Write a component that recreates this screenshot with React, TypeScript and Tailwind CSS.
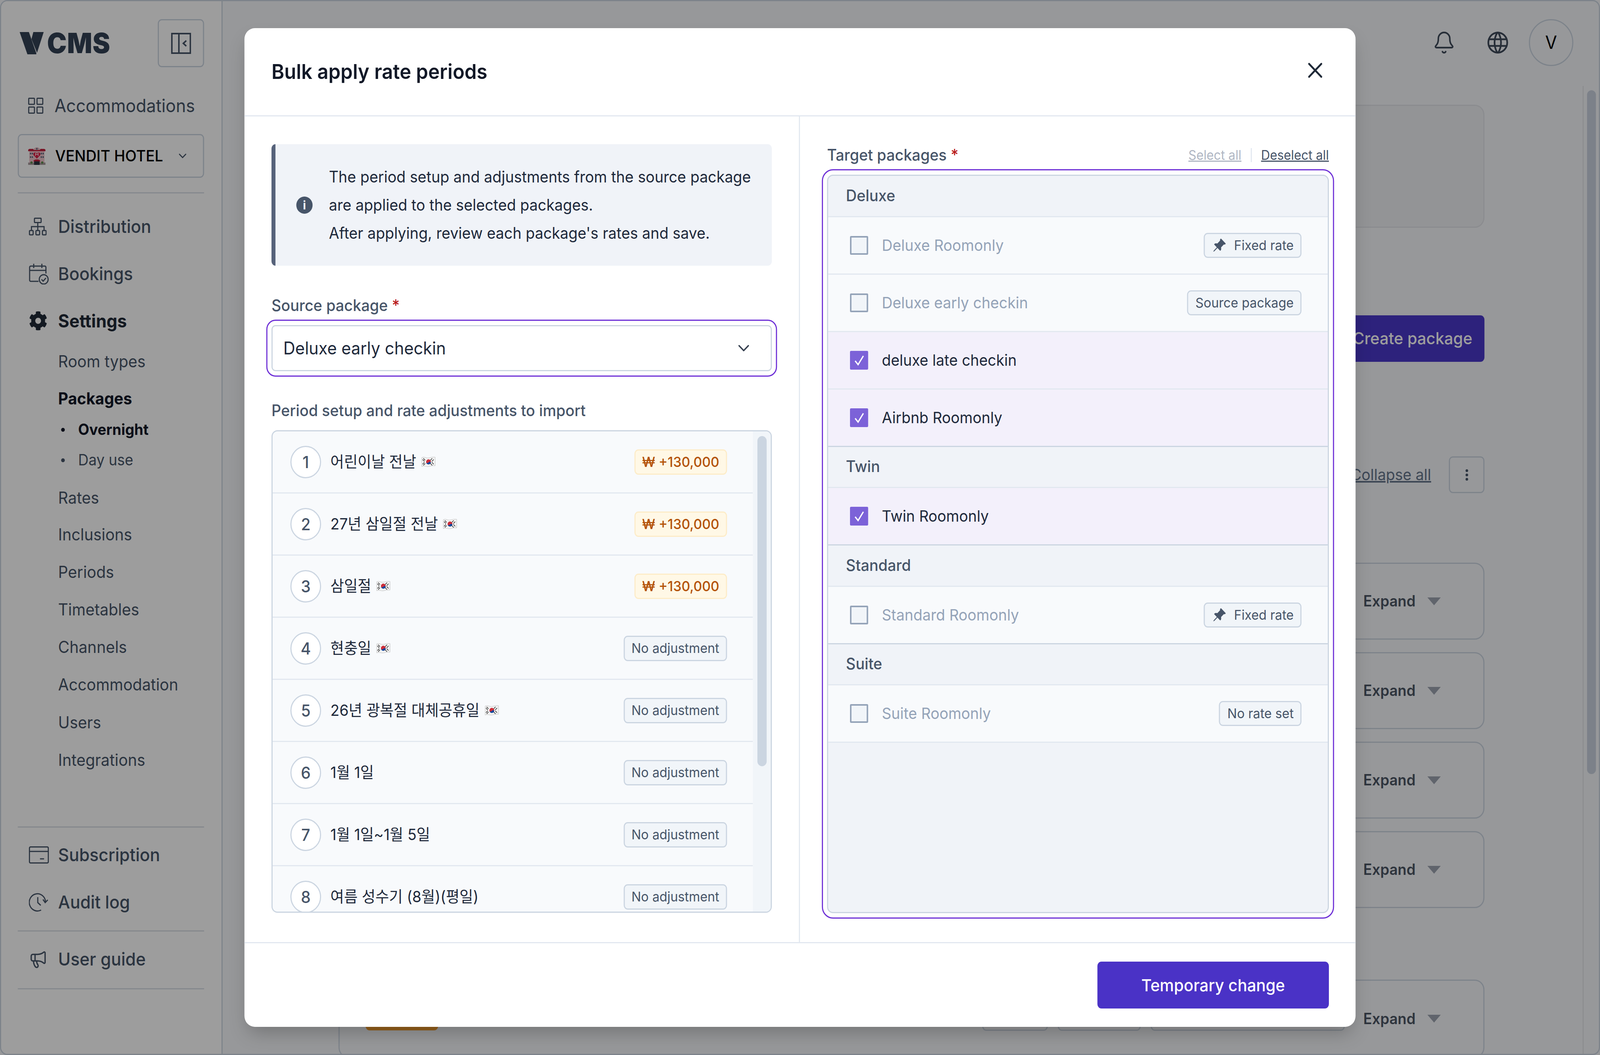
import { Bell, ChevronDown, Megaphone, X } from 'lucide-react'
import { BsPinAngleFill } from 'react-icons/bs'
import { FaCog } from 'react-icons/fa'
import { TbWorld } from 'react-icons/tb'

const periods = [
  { label: '어린이날 전날', flag: true, amount: true },
  { label: '27년 삼일절 전날', flag: true, amount: true },
  { label: '삼일절', flag: true, amount: true },
  { label: '현충일', flag: true, amount: false },
  { label: '26년 광복절 대체공휴일', flag: true, amount: false },
  { label: '1월 1일', flag: false, amount: false },
  { label: '1월 1일~1월 5일', flag: false, amount: false },
  { label: '여름 성수기 (8월)(평일)', flag: false, amount: false },
]

const groups = [
  {
    name: 'Deluxe',
    rows: [
      { label: 'Deluxe Roomonly', checked: false, badge: 'Fixed rate', pin: true },
      { label: 'Deluxe early checkin', checked: false, badge: 'Source package', pin: false },
      { label: 'deluxe late checkin', checked: true, badge: '', pin: false },
      { label: 'Airbnb Roomonly', checked: true, badge: '', pin: false },
    ],
  },
  { name: 'Twin', rows: [{ label: 'Twin Roomonly', checked: true, badge: '', pin: false }] },
  { name: 'Standard', rows: [{ label: 'Standard Roomonly', checked: false, badge: 'Fixed rate', pin: true }] },
  { name: 'Suite', rows: [{ label: 'Suite Roomonly', checked: false, badge: 'No rate set', pin: false }] },
]

const FlagKr = () => (
  <svg viewBox="0 0 38 30" className="ml-[14px] h-[30px] w-[38px] shrink-0">
    <path d="M1 4c7-3 12 2 18 1s11-3 18-2v22c-7-1-12 1-18 2s-11-3-18 0z" fill="#f4f4f4" stroke="#bdbdbd" strokeWidth="1" />
    <circle cx="19" cy="15" r="6.5" fill="#cd2e3a" />
    <path d="M12.700 16.500a6.500 6.500 0 0 0 12.600 0c-1.500-2.200-4.500-2.200-6.300 0s-4.800 2-6.300 0z" fill="#0047a0" />
    <path d="M5 6l5 5M3 9l5 5M29 6l-5 5M33 9l-5 5M5 24l5-5M3 21l5-5M29 24l-5-5M33 21l-5-5" stroke="#222" strokeWidth="1.6" />
  </svg>
)

const HotelEmoji = () => (
  <svg viewBox="0 0 47 46" className="h-[46px] w-[47px] shrink-0">
    <rect x="3" y="7" width="41" height="39" fill="#eec4ca" />
    <path d="M14 8c2-5 6-7 9.500-7S31 3 33 8z" fill="#e6b3bb" />
    <path d="M0 9c0-3 2-4 5-4h9l1 3h17l1-3h9c3 0 5 1 5 4v2H0z" fill="#c2203c" />
    <rect x="22" y="3" width="3" height="4" fill="#4b5f78" />
    <rect x="5" y="15" width="3" height="4" fill="#4b5f78" />
    <rect x="10" y="15" width="3" height="4" fill="#4b5f78" />
    <rect x="34" y="15" width="3" height="4" fill="#4b5f78" />
    <rect x="39" y="15" width="3" height="4" fill="#4b5f78" />
    <rect x="5" y="24" width="3" height="4" fill="#4b5f78" />
    <rect x="10" y="24" width="3" height="4" fill="#4b5f78" />
    <rect x="34" y="24" width="3" height="4" fill="#4b5f78" />
    <rect x="39" y="24" width="3" height="4" fill="#4b5f78" />
    <path d="M23.500 30l-9-9c-3-6 6-10 9-4 3-6 12-2 9 4z" fill="#d81e45" />
    <path d="M20 15v8M27 15v8M20 19h7" stroke="#fff" strokeWidth="1.5" fill="none" />
    <rect x="0" y="40" width="47" height="6" fill="#a89a9c" />
    <path d="M14 37c1-4 5-5 9.500-5s8.500 1 9.500 5z" fill="#c2203c" />
    <rect x="16" y="37" width="15" height="9" fill="#2c3440" />
    <circle cx="9" cy="40" r="3" fill="#5c8a4d" />
    <circle cx="38" cy="40" r="3" fill="#5c8a4d" />
  </svg>
)

const GridIcon = () => (
  <svg viewBox="0 0 41 41" className="h-[41px] w-[41px]" fill="none" stroke="#475569" strokeWidth="3">
    <rect x="1.5" y="1.500" width="15.500" height="15.500" rx="1.5" />
    <rect x="24" y="1.500" width="15.500" height="15.500" rx="1.5" />
    <rect x="1.5" y="24" width="15.500" height="15.500" rx="1.5" />
    <rect x="24" y="24" width="15.500" height="15.500" rx="1.5" />
  </svg>
)

const DistributionIcon = () => (
  <svg viewBox="0 0 48 46" className="h-[46px] w-[48px]" fill="none" stroke="#475569" strokeWidth="3">
    <rect x="15" y="1.5" width="18" height="11" rx="1.5" />
    <path d="M24 13v10M7 33v-10h34v10M24 23v10" />
    <rect x="1.5" y="33" width="10" height="11" rx="2" />
    <rect x="19" y="33" width="10" height="11" rx="2" />
    <rect x="36.5" y="33" width="10" height="11" rx="2" />
  </svg>
)

const BookingsIcon = () => (
  <svg viewBox="0 0 54 54" className="h-[54px] w-[54px]" fill="none" stroke="#475569" strokeWidth="3">
    <path d="M26 46H5a3 3 0 0 1-3-3V10a3 3 0 0 1 3-3h38a3 3 0 0 1 3 3v16" />
    <path d="M2 18h44M13 1v11M35 1v11" />
    <circle cx="40" cy="41" r="12" />
    <path d="M34 41l4.500 4.500 7.500-8" />
  </svg>
)

const SubscriptionIcon = () => (
  <svg viewBox="0 0 54 44" className="h-[44px] w-[54px]" fill="none" stroke="#475569" strokeWidth="3">
    <rect x="1.5" y="1.500" width="51" height="41" rx="3" />
    <path d="M2 13h50M30 32h11" />
  </svg>
)

const AuditIcon = () => (
  <svg viewBox="0 0 54 50" className="h-[50px] w-[54px]" fill="none" stroke="#475569" strokeWidth="3">
    <path d="M45 25A22 22 0 1 0 33 45" />
    <path d="M24 12v14l8 7" />
    <path d="M38 18l6 8 7-7" />
  </svg>
)

const CollapseIcon = () => (
  <svg viewBox="0 0 54 54" className="h-[54px] w-[54px]" fill="none" stroke="#475569" strokeWidth="4">
    <rect x="2" y="2" width="50" height="50" />
    <path d="M21 2v50" />
    <path d="M41 20l-8 7 8 7" />
  </svg>
)

const Rule = () => <div className="h-[3px] w-full bg-[#d9dde6]" />

const NavRow = ({ icon, label, bold }: { icon: React.ReactNode; label: string; bold?: boolean }) => (
  <div className="flex h-[120.500px] items-center">
    <div className="flex w-[109px] pl-[30px]">{icon}</div>
    <span className={bold ? 'text-[46px] font-bold text-[#1f2937]' : 'text-[45.500px] font-medium text-[#475569]'}>{label}</span>
  </div>
)

const SubRow = ({ label, bold, h }: { label: string; bold?: boolean; h: string }) => (
  <div className={`${h} flex items-center pl-[109px] text-[42px] ${bold ? 'font-bold text-[#111827]' : 'text-[#475569]'}`}>{label}</div>
)

const Sidebar = () => (
  <aside className="flex h-full w-[598px] shrink-0 flex-col border-r-3 border-[#cbd5e1] bg-white pt-[46px] pr-[47px] pl-[45px]">
    <div className="flex h-[123px] items-center justify-between">
      <div className="flex items-center pl-[5px]">
        <svg viewBox="0 0 65 57" className="h-[57px] w-[65px]">
          <path d="M0 0h25l20 54v3H21z" fill="#334155" />
          <path d="M37 0h28L47 53 32 18z" fill="#334155" />
        </svg>
        <span className="ml-[9px] text-[71px] leading-none font-black tracking-[1px] text-[#334155]">CMS</span>
      </div>
      <div className="flex h-[123px] w-[125px] items-center justify-center rounded-[11px] border-3 border-[#cbd5e1]">
        <CollapseIcon />
      </div>
    </div>
    <div className="flex h-[171px] items-center pt-[25px] pl-[28px]">
      <GridIcon />
      <span className="ml-[30px] text-[46px] text-[#475569]">Accommodations</span>
    </div>
    <div className="flex h-[112px] items-center rounded-[11px] border-3 border-[#cbd5e1] pr-[38px] pl-[25px]">
      <HotelEmoji />
      <span className="ml-[26px] flex-1 text-[40px] font-medium text-black">VENDIT HOTEL</span>
      <ChevronDown className="h-[34px] w-[34px] text-[#475569]" strokeWidth={2} />
    </div>
    <div className="mt-[37px] mb-[25px]"><Rule /></div>
    <NavRow icon={<DistributionIcon />} label="Distribution" />
    <NavRow icon={<BookingsIcon />} label="Bookings" />
    <NavRow icon={<FaCog className="h-[50px] w-[50px] text-[#1f2937]" />} label="Settings" bold />
    <SubRow label="Room types" h="h-[86px]" />
    <SubRow label="Packages" bold h="h-[104px]" />
    <div className="flex h-[56px] items-center pl-[117px] text-[39px] font-bold text-[#111827]">
      <span className="mr-[36px] h-[10px] w-[10px] rounded-full bg-[#111827]" />
      Overnight
    </div>
    <div className="flex h-[100px] items-center pl-[117px] text-[39px] text-[#475569]">
      <span className="mr-[36px] h-[10px] w-[10px] rounded-full bg-[#475569]" />
      Day use
    </div>
    <SubRow label="Rates" h="h-[92px]" />
    {['Inclusions', 'Periods', 'Timetables', 'Channels', 'Accommodation', 'Users', 'Integrations'].map((item) => (
      <SubRow key={item} label={item} h="h-[96.100px]" />
    ))}
    <div className="mt-[123px]"><Rule /></div>
    <div className="h-[10px]" />
    <NavRow icon={<SubscriptionIcon />} label="Subscription" />
    <NavRow icon={<AuditIcon />} label="Audit log" />
    <div className="mt-[12px] mb-[11px]"><Rule /></div>
    <NavRow icon={<Megaphone className="h-[50px] w-[50px] text-[#475569]" strokeWidth={1.7} />} label="User guide" />
    <div className="mt-[13px]"><Rule /></div>
  </aside>
)

const ExpandLabel = () => (
  <>
    <span className="text-[39px] font-semibold text-[#4b5563]">Expand</span>
    <span className="ml-[32px] h-0 w-0 border-x-[18px] border-t-[20px] border-x-transparent border-t-[#9ca3af]" />
  </>
)

const ExpandCard = () => (
  <div className="mb-[32px] flex h-[197px] items-center justify-end rounded-[26px] border-3 border-[#cbd5e1] pr-[115px]">
    <ExpandLabel />
  </div>
)

const Main = () => (
  <main className="flex h-full min-w-0 flex-1 flex-col">
    <header className="flex h-[217px] shrink-0 items-center justify-end pr-[69px] pb-[6px]">
      <Bell className="h-[62px] w-[62px] text-[#3f4a5a]" strokeWidth={1.6} />
      <TbWorld className="ml-[80px] h-[68px] w-[68px] text-[#3f4a5a]" strokeWidth={1.6} />
      <div className="ml-[50px] flex h-[120px] w-[120px] items-center justify-center rounded-full border-3 border-[#cbd5e1] text-[46px] text-black">V</div>
    </header>
    <div className="flex min-h-0 flex-1">
      <div className="min-w-0 flex-1 overflow-hidden pr-[265px] pl-[313px]">
        <div className="mt-[48px] h-[315px] rounded-[26px] border-3 border-[#e2e4e9] bg-[#eff1f4]" />
        <div className="mt-[224px] flex justify-end">
          <div className="flex h-[119px] w-[388px] items-center justify-center rounded-[11px] bg-[#4a38c9] text-[42.700px] font-medium text-white">Create package</div>
        </div>
        <div className="mt-[242px] flex h-[94px] items-center justify-end">
          <span className="text-[40px] text-[#64748b] underline">Collapse all</span>
          <div className="ml-[48px] flex h-[94px] w-[96px] flex-col items-center justify-center gap-[4px] rounded-[11px] border-3 border-[#cbd5e1]">
            <span className="h-[7px] w-[7px] rounded-full bg-[#475569]" />
            <span className="h-[7px] w-[7px] rounded-full bg-[#475569]" />
            <span className="h-[7px] w-[7px] rounded-full bg-[#475569]" />
          </div>
        </div>
        <div className="mt-[178px]">
          <ExpandCard />
          <ExpandCard />
          <ExpandCard />
          <ExpandCard />
          <div className="mt-[183px] flex h-[200px] items-center rounded-[26px] border-3 border-[#cbd5e1] pr-[115px] pl-[70px]">
            <span className="h-[60px] w-[196px] rounded-[11px] bg-[#f59e2c]" />
            <div className="ml-auto flex gap-[27px] pr-[50px]">
              <span className="h-[62px] w-[177px] rounded-[11px] border-3 border-[#cbd5e1]" />
              <span className="h-[62px] w-[224px] rounded-[11px] border-3 border-[#cbd5e1]" />
              <span className="h-[62px] w-[524px] rounded-[11px] border-3 border-[#cbd5e1]" />
            </div>
            <ExpandLabel />
          </div>
        </div>
      </div>
      <div className="flex h-full w-[44px] shrink-0 justify-center border-l-3 border-[#e4e6ea] pt-[11px]">
        <div className="h-[1750px] w-[24px] rounded-full bg-[#cad2de]" />
      </div>
    </div>
  </main>
)

const PeriodRow = ({ index, label, flag, amount }: { index: number; label: string; flag: boolean; amount: boolean }) => (
  <div className="flex h-[159px] shrink-0 items-center border-b-3 border-[#e2e8f0] pr-[70px] pl-[48px]">
    <div className="flex h-[83px] w-[83px] shrink-0 items-center justify-center rounded-full border-3 border-[#cbd5e1] bg-white text-[42px] font-medium text-[#475569]">{index}</div>
    <span className="ml-[25px] text-[40px] text-[#1e293b]">{label}</span>
    {flag && <FlagKr />}
    {amount ? (
      <span className="ml-auto flex h-[65px] items-center rounded-[11px] border-3 border-[#fdecc8] bg-[#fff8e6] px-[18px] text-[36px] font-medium text-[#b45309]">₩ +130,000</span>
    ) : (
      <span className="ml-auto flex h-[65px] items-center rounded-[11px] border-3 border-[#cbd5e1] bg-[#f1f5f9] px-[18px] text-[34.500px] text-[#475569]">No adjustment</span>
    )}
  </div>
)

const TargetRow = ({ label, checked, badge, pin, last }: { label: string; checked: boolean; badge: string; pin: boolean; last: boolean }) => (
  <div className={`flex h-[147px] items-center border-b-3 pr-[71px] pl-[59px] ${last ? 'border-[#cbd5e1]' : 'border-[#e2e8f0]'} ${checked ? 'bg-[#f3f0fb]' : 'bg-[#f8fafc]'}`}>
    {checked ? (
      <span className="flex h-[48px] w-[49px] items-center justify-center rounded-[3px] bg-[#7c62d8]">
        <svg viewBox="0 0 24 24" className="h-[38px] w-[38px]" fill="none" stroke="#fff" strokeWidth="2.200">
          <path d="M5 13l5 6 9-14" />
        </svg>
      </span>
    ) : (
      <span className="h-[48px] w-[49px] rounded-[3px] border-4 border-[#94a3b8] bg-[#f1f5f9]" />
    )}
    <span className={`ml-[37px] text-[40px] ${checked ? 'text-[#1e293b]' : 'text-[#94a3b8]'}`}>{label}</span>
    {badge && (
      <span className="ml-auto flex h-[64px] items-center rounded-[11px] border-3 border-[#cbd5e1] bg-[#f1f5f9] pr-[18px] pl-[20px] text-[34.500px] text-[#475569]">
        {pin && <BsPinAngleFill className="mr-[21px] h-[38px] w-[38px] text-[#475569]" />}
        {badge}
      </span>
    )}
  </div>
)

const Modal = () => (
  <div className="absolute top-[72px] left-[660px] flex h-[2556px] w-[3000px] flex-col rounded-[28px] bg-white shadow-2xl">
    <div className="flex h-[226px] shrink-0 items-center justify-between border-b-3 border-[#e2e8f0] pr-[76px] pl-[73px]">
      <h2 className="text-[52.500px] font-semibold text-[#111827]">Bulk apply rate periods</h2>
      <X className="mb-[8px] h-[66px] w-[66px] text-[#1f2937]" strokeWidth={1.8} />
    </div>
    <div className="flex min-h-0 flex-1">
      <div className="flex w-[1500px] shrink-0 flex-col border-r-3 border-[#e2e8f0] px-[73px] pt-[71px] pb-[75px]">
        <div className="flex h-[311px] shrink-0 items-center rounded-[11px] border-l-[11px] border-[#56627a] bg-[#f0f3f8] pl-[56px]">
          <span className="flex h-[44px] w-[44px] shrink-0 items-center justify-center rounded-full bg-[#475569] text-[30px] leading-none font-bold text-white">i</span>
          <p className="ml-[44px] text-[40.300px] leading-[72px] text-[#1e293b]">
            The period setup and adjustments from the source package
            <br />
            are applied to the selected packages.
            <br />
            After applying, review each package's rates and save.
          </p>
        </div>
        <div className="mt-[72px] h-[60px] shrink-0 text-[40.500px] leading-[60px] font-medium text-[#475569]">
          Source package <span className="text-[#b91c1c]">*</span>
        </div>
        <div className="mt-[20px] flex h-[118px] shrink-0 items-center justify-between rounded-[11px] border-3 border-[#cbd5e1] pr-[48px] pl-[29px] text-[44.500px] text-[#1e293b] outline-3 outline-offset-[11px] outline-[#6d2fd6]">
          Deluxe early checkin
          <ChevronDown className="h-[50px] w-[50px] text-[#374151]" strokeWidth={1.8} />
        </div>
        <div className="mt-[71px] h-[60px] shrink-0 text-[40.500px] leading-[60px] font-medium text-[#475569]">Period setup and rate adjustments to import</div>
        <div className="mt-[20px] flex min-h-0 flex-1 overflow-hidden rounded-[16px] border-3 border-[#cbd5e1] bg-[#f8fafc]">
          <div className="flex min-w-0 flex-1 flex-col overflow-hidden">
            {periods.map((p, i) => (
              <PeriodRow key={p.label} index={i + 1} label={p.label} flag={p.flag} amount={p.amount} />
            ))}
          </div>
          <div className="flex w-[48px] shrink-0 justify-center bg-[#f1f5f9] pt-[12px]">
            <div className="h-[845px] w-[25px] rounded-full bg-[#cbd5e1]" />
          </div>
        </div>
      </div>
      <div className="flex min-w-0 flex-1 flex-col pt-[71px] pr-[72px] pb-[74px] pl-[73px]">
        <div className="flex h-[56px] shrink-0 items-center justify-between">
          <div className="text-[40.500px] font-medium text-[#475569]">
            Target packages <span className="text-[#b91c1c]">*</span>
          </div>
          <div className="flex items-center text-[33.500px]">
            <span className="text-[#b0b7c4] underline">Select all</span>
            <span className="mx-[25px] h-[36px] w-[3px] bg-[#e2e8f0]" />
            <span className="text-[#475569] underline">Deselect all</span>
          </div>
        </div>
        <div className="mt-[22px] min-h-0 flex-1 overflow-hidden rounded-[16px] border-3 border-[#cbd5e1] bg-[#f0f3f8] outline-3 outline-offset-[11px] outline-[#6d2fd6]">
          {groups.map((g) => (
            <div key={g.name}>
              <div className="flex h-[105.500px] items-center border-b-3 border-[#e2e8f0] pl-[48px] text-[40.500px] font-medium text-[#475569]">{g.name}</div>
              {g.rows.map((r, i) => (
                <TargetRow key={r.label} label={r.label} checked={r.checked} badge={r.badge} pin={r.pin} last={g.name !== 'Suite' && i === g.rows.length - 1} />
              ))}
            </div>
          ))}
        </div>
      </div>
    </div>
    <div className="flex h-[217px] shrink-0 items-center justify-end border-t-3 border-[#e2e8f0] pr-[72px]">
      <div className="flex h-[120px] w-[625px] items-center justify-center rounded-[11px] bg-[#4a32c6] text-[43px] font-medium text-white">Temporary change</div>
    </div>
  </div>
)

const App = () => (
  // the window can come out narrower than the 4320 this page is drawn for, so fit it at run time
  <div
    className="relative h-[2700px] w-[4320px] origin-top-left overflow-hidden bg-[#f5f7fb] font-['Inter','Noto_Sans_CJK_KR',sans-serif]"
    style={{ transform: `scaleX(${window.innerWidth / 4320})` }}
  >
    <div className="flex h-full w-full overflow-hidden rounded-[20px] border-3 border-[#cbd5e1]">
      <Sidebar />
      <Main />
    </div>
    <div className="absolute inset-0 bg-black/[0.385]" />
    <Modal />
  </div>
)

export default App
